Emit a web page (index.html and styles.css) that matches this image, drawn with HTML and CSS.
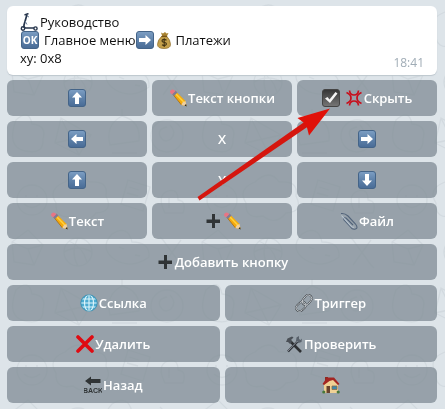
FILE: index.html
```
<!DOCTYPE html>
<html lang="ru">
<head>
    <meta charset="UTF-8">
    <meta name="viewport" content="width=device-width, initial-scale=1.0">
    <title>Руководство</title>
    <link rel="stylesheet" href="styles.css">
</head>
<body>
    <!-- icons used more than once -->
    <svg class="defs" width="0" height="0" aria-hidden="true">
        <defs>
            <linearGradient id="blue" x1="0" y1="0" x2="0" y2="1">
                <stop offset="0" stop-color="#7d9fc4"/>
                <stop offset="0.5" stop-color="#5f82aa"/>
                <stop offset="1" stop-color="#486b96"/>
            </linearGradient>
            <linearGradient id="dark" x1="0" y1="0" x2="0" y2="1">
                <stop offset="0" stop-color="#343434"/>
                <stop offset="1" stop-color="#777"/>
            </linearGradient>
            <pattern id="doodles" width="190" height="170" patternUnits="userSpaceOnUse">
                <g fill="none" stroke="#cbd3d9" stroke-width="1.3">
                    <circle cx="32" cy="30" r="15"/>
                    <path d="M25 26h2M36 26h2M24 34q8 7 16 0"/>
                    <path d="M65 12q15-14 24 0 20-2 17 14 8 16-10 17-10 13-23 3-18 4-17-13-9-14 9-21z"/>
                    <path d="M128 10l22 7-7 24-22-7zM129 17l10 3M127 23l11 3"/>
                    <path d="M165 43q-9-18 3-22 10-3 10 9 9 1 5 13zM169 28v10"/>
                    <path d="M12 72l16-12 15 15-9 20-20-3zM12 72l16 7 15-4M28 79l6 16"/>
                    <circle cx="78" cy="82" r="14"/>
                    <path d="M64 82q14-8 28 0M78 68q-8 14 0 28M69 71q14 6 18 21"/>
                    <path d="M112 64q16-10 20 8 18 0 17 15-18 13-35 2-15-11-2-25zM119 77l5 2M135 85l5 1"/>
                    <path d="M163 70l18 25M181 70l-18 25M160 67l4 4M184 98l-4-4"/>
                    <path d="M16 120q13-12 16 4 15 1 11 15 1 16-18 12-19-4-9-31z"/>
                    <path d="M61 118l30 17-12 20-24-12zM61 118l18 37M91 135l-36 8"/>
                    <path d="M110 145q-5-20 12-29 19 5 17 25zM122 116v-7M112 153h25"/>
                    <circle cx="167" cy="136" r="16"/>
                    <path d="M167 127q-10 2-7 9 4 8 11 3 6-7-1-14"/>
                </g>
            </pattern>
            <symbol id="up" viewBox="0 0 18 18">
                <rect x="0.5" y="0.5" width="17" height="17" rx="2.5" fill="url(#blue)" stroke="#446488"/>
                <path d="M9 3l5 5.500h-3V15H7V8.500H4z" fill="#fff"/>
            </symbol>
            <symbol id="right" viewBox="0 0 18 18">
                <rect x="0.5" y="0.5" width="17" height="17" rx="2.5" fill="url(#blue)" stroke="#446488"/>
                <path d="M15 9l-5.500 5v-3H3V7h6.500V4z" fill="#fff"/>
            </symbol>
            <symbol id="left" viewBox="0 0 18 18">
                <rect x="0.5" y="0.5" width="17" height="17" rx="2.5" fill="url(#blue)" stroke="#446488"/>
                <path d="M3 9l5.500-5v3H15v4H8.500v3z" fill="#fff"/>
            </symbol>
            <symbol id="down" viewBox="0 0 18 18">
                <rect x="0.5" y="0.5" width="17" height="17" rx="2.5" fill="url(#blue)" stroke="#446488"/>
                <path d="M9 15l-5-5.500h3V3h4v6.500h3z" fill="#fff"/>
            </symbol>
            <symbol id="pencil" viewBox="0 0 18 18">
                <path d="M4 5.500l3-3L16.500 12l1 5-5-1z" fill="#f5a90c"/>
                <path d="M5.700 3.800l9.500 9.700" stroke="#ffd13d" stroke-width="1.5"/>
                <path d="M4 5.500l8.500 10.500" stroke="#a56a13" stroke-width="0.8"/>
                <path d="M12.500 16l1-2.500 3-1.500 1 5z" fill="#efd0a0"/>
                <path d="M15.500 16.600l1.600-1.600 0.600 2.400z" fill="#222"/>
                <path d="M3 5l3.500-3.500 2 2-3.500 3.500z" fill="#807b93"/>
                <path d="M1 3.500q0-3 3-3l2.500 1.500L3 5.500z" fill="#e87585"/>
            </symbol>
            <symbol id="plus" viewBox="0 0 18 18">
                <path d="M8 2h3v5.500h5V11h-5v5H8v-5H2.500V7.500H8z" fill="#303436"/>
            </symbol>
        </defs>
    </svg>
    <svg class="wallpaper" aria-hidden="true">
        <rect width="100%" height="100%" fill="url(#doodles)"/>
    </svg>

    <main class="chat">
        <div class="message">
            <p class="line">
                <svg class="icon" viewBox="0 0 18 18">
                    <g fill="none" stroke="#26354c">
                        <path d="M4.500 2L8.500 0.500" stroke-width="1.500"/>
                        <path d="M7 1.500L4 12Q3.500 14.500 5.500 15H14" stroke-width="1.700"/>
                        <path d="M7 3l2 1M5 8l2 3.500" stroke="#6e819a"/>
                        <circle cx="3" cy="15.500" r="1.700" stroke-width="1.400"/>
                        <circle cx="15.500" cy="15.500" r="1.600" stroke-width="1.400"/>
                    </g>
                </svg>
                <span class="word">Руководство</span>
            </p>
            <p class="line">
                <svg class="icon framed" viewBox="0 0 18 18">
                    <rect x="0.500" y="0.500" width="17" height="17" rx="2.500" fill="url(#blue)" stroke="#446488"/>
                    <text class="ok" x="9" y="13" text-anchor="middle">OK</text>
                </svg>
                <span class="word spaced">Главное меню</span>
                <svg class="icon"><use href="#right"/></svg>
                <svg class="icon" viewBox="0 0 18 18">
                    <path d="M6 1.500l2 1 2-1.500 1.500 1.500 2-0.500-2 4h-4z" fill="#a8822f"/>
                    <path d="M7 5h4.500q4 4 4 8.500 0 4-6.500 4t-6.500-4Q2.500 9 7 5z" fill="#c4a04b" stroke="#8d6b28" stroke-width="0.700"/>
                    <path d="M6.500 5.500h5.500" stroke="#765215" stroke-width="1.200"/>
                    <path d="M11.500 9.300Q9 7.500 7.300 9q-1 1.800 1.700 2.300 3 0.600 2.200 2.400-1.500 1.600-4.200 0M9.200 7.300v8.700" fill="none" stroke="#403213" stroke-width="1.100"/>
                </svg>
                <span class="word">Платежи</span>
            </p>
            <p class="line"><span>xy: 0x8</span></p>
            <time class="time">18:41</time>
        </div>

        <div class="row top">
            <button type="button" aria-label="Вверх"><svg class="icon"><use href="#up"/></svg></button>
            <button type="button"><svg class="icon"><use href="#pencil"/></svg>Текст кнопки</button>
            <button type="button">
                <svg class="icon check" viewBox="0 0 18 18">
                    <rect x="0.500" y="0.500" width="17" height="17" rx="2.500" fill="url(#dark)" stroke="#444"/>
                    <path d="M3 9.500l2.500-1.500 2 2.500L13.500 3l2 1.500L8 14z" fill="#f4f4f4"/>
                </svg>
                <svg class="icon" viewBox="0 0 18 18">
                    <g fill="none" stroke="#c80e1b" stroke-width="1.700">
                        <path d="M4.500 1.500q0.500 4.500 4.500 4.500t4.500-4.500"/>
                        <path d="M4.500 16.500q0.500-4.500 4.500-4.500t4.500 4.500"/>
                        <path d="M1.500 3.500Q6 5.500 6 9t-4.500 5.500"/>
                        <path d="M16.500 3.500Q12 5.500 12 9t4.500 5.500"/>
                    </g>
                </svg>Скрыть
            </button>
            <svg class="pointer" viewBox="0 0 140 100" aria-hidden="true">
                <path d="M6.500 91L8.500 94.500 117 20.500l-3-5z" fill="#d5160e"/>
                <path d="M139 2.500L106.500 12l6 4.500 3.500 5 2 8z" fill="#e01109"/>
            </svg>
        </div>
        <div class="row">
            <button type="button" aria-label="Влево"><svg class="icon"><use href="#left"/></svg></button>
            <button type="button">X</button>
            <button type="button" aria-label="Вправо"><svg class="icon"><use href="#right"/></svg></button>
        </div>
        <div class="row">
            <button type="button" aria-label="Вверх"><svg class="icon"><use href="#up"/></svg></button>
            <button type="button">Y</button>
            <button type="button" aria-label="Вниз"><svg class="icon"><use href="#down"/></svg></button>
        </div>
        <div class="row">
            <button type="button"><svg class="icon"><use href="#pencil"/></svg>Текст</button>
            <button type="button" aria-label="Добавить текст"><svg class="icon"><use href="#plus"/></svg><svg class="icon"><use href="#pencil"/></svg></button>
            <button type="button">
                <svg class="icon" viewBox="0 0 18 18">
                    <g fill="none" stroke="#53647b" stroke-width="1.100">
                        <path d="M1 1.500q4-0.500 7 2.500l7.500 8q3 4 0 5t-5-2L4 8q-1-3 2-2l7 7"/>
                        <path d="M1.500 3.500l9 10q2 2.500 3.500 1.500" stroke="#bbc7d3"/>
                    </g>
                </svg>Файл
            </button>
        </div>
        <div class="row">
            <button type="button"><svg class="icon"><use href="#plus"/></svg>Добавить кнопку</button>
        </div>
        <div class="row">
            <button type="button">
                <svg class="icon" viewBox="0 0 18 18">
                    <circle cx="9" cy="9" r="8.300" fill="#4cabd0"/>
                    <g fill="none" stroke="#dff6fb" stroke-width="1.100">
                        <path d="M9 1v16M1 9h16M2.500 5h13M2.500 13h13"/>
                        <ellipse cx="9" cy="9" rx="4.500" ry="8"/>
                    </g>
                    <circle cx="9" cy="9" r="8.200" fill="none" stroke="#388bad" stroke-width="0.800"/>
                </svg>Ссылка
            </button>
            <button type="button">
                <svg class="icon" viewBox="0 0 18 18">
                    <g fill="none">
                        <rect x="6.500" y="2.500" width="11" height="7" rx="3.500" transform="rotate(-50 12 6)" stroke="#3e4349" stroke-width="1.800"/>
                        <rect x="0.500" y="9" width="11" height="7" rx="3.500" transform="rotate(-45 6 12.500)" stroke="#3e4349" stroke-width="1.800"/>
                        <rect x="6.500" y="2.500" width="11" height="7" rx="3.500" transform="rotate(-50 12 6)" stroke="#d7dbdf" stroke-width="0.800"/>
                        <rect x="0.500" y="9" width="11" height="7" rx="3.500" transform="rotate(-45 6 12.500)" stroke="#d7dbdf" stroke-width="0.800"/>
                    </g>
                </svg>Триггер
            </button>
        </div>
        <div class="row">
            <button type="button">
                <svg class="icon" viewBox="0 0 18 18">
                    <path d="M2 2l14 14M16 2L2 16" stroke="#df0b12" stroke-width="3.600" stroke-linecap="round"/>
                </svg>Удалить
            </button>
            <button type="button">
                <svg class="icon" viewBox="0 0 18 18">
                    <path d="M5 6l11 11" stroke="#2e3033" stroke-width="2.600"/>
                    <path d="M1 7l1.500-3.500L7 1.500l1.500 1L6 5l1 2-2 2-2-2z" fill="#4a4f56"/>
                    <path d="M3 16.500L13 6" stroke="#30333a" stroke-width="2.400"/>
                    <path d="M11 6l0.500-3.500L14 1v3l1.500 1L17 3.500 16.500 7 13.500 8z" fill="#59616b"/>
                    <path d="M3 16L12.500 6" stroke="#adb4bd" stroke-width="0.700"/>
                </svg>Проверить
            </button>
        </div>
        <div class="row">
            <button type="button">
                <svg class="icon" viewBox="0 0 18 18">
                    <path d="M1 5l6-4.500v2.500h9.500v4H7v2.500z" fill="#303436"/>
                    <text class="back" x="9" y="17" text-anchor="middle">BACK</text>
                </svg>Назад
            </button>
            <button type="button" aria-label="Домой">
                <svg class="icon" viewBox="0 0 18 18">
                    <path d="M3 1h3v6H3z" fill="#8c2920"/>
                    <path d="M2 9l4-6h6l4 6v8H2z" fill="#efd195"/>
                    <path d="M0.500 8L5 1.500h7L17.500 8l-1.500 1-5-5-3.500 1L2 9z" fill="#a32522"/>
                    <path d="M4.500 10h3.500v7H4.500z" fill="#69432e"/>
                    <path d="M10 10h5v3.500h-5z" fill="#3b88ad" stroke="#8b6c46" stroke-width="0.800"/>
                    <circle cx="1.800" cy="16" r="1.600" fill="#48783b"/>
                    <circle cx="16.200" cy="16" r="1.600" fill="#48783b"/>
                </svg>
            </button>
        </div>
    </main>
</body>
</html>
```
FILE: styles.css
```
* {
    box-sizing: border-box;
}

body {
    margin: 0;
    background-color: #dde4e9;
    font-family: 'Open Sans', 'Noto Sans', sans-serif;
    font-size: 13px;
    line-height: 18px;
    color: #111;
}

.defs {
    position: absolute;
}

.wallpaper {
    position: fixed;
    top: 0;
    left: 0;
    width: 100%;
    height: 100%;
    opacity: 0.6;
}

.chat {
    position: relative;
    display: flex;
    flex-direction: column;
    gap: 5px;
    padding: 6px 8px 6px 7px;
}

.message {
    position: relative;
    padding: 7px 13px;
    background-color: #fff;
    border-radius: 6px;
    box-shadow: 0 1px 1px #bdc7ce;
    min-height: 69px;
}

.line {
    display: flex;
    align-items: center;
    gap: 1px;
    height: 18px;
    margin: 0;
}

.word {
    margin: 0 1px;
}

.framed {
    margin-left: 1px;
}

.spaced {
    margin: 0 0 0 4px;
}

.time {
    position: absolute;
    right: 13px;
    bottom: 3px;
    font-size: 12px;
    color: #a0acb6;
}

.icon {
    flex: none;
    width: 18px;
    height: 18px;
}

.ok {
    font-size: 10px;
    font-weight: 700;
    fill: #fff;
}

.back {
    font-family: 'Liberation Sans', sans-serif;
    font-size: 7px;
    font-weight: 700;
    fill: #303436;
}

.row {
    display: flex;
    gap: 5px;
}

.top {
    position: relative;
}

button {
    flex: 1 1 0;
    display: flex;
    align-items: center;
    justify-content: center;
    gap: 1px;
    min-width: 0;
    height: 36px;
    padding: 0;
    border: none;
    border-radius: 6px;
    background-color: rgba(127, 139, 148, 0.75);
    color: #fff;
    font-family: inherit;
    font-size: 13px;
    font-weight: 600;
    line-height: 18px;
    cursor: pointer;
}

button:hover {
    background-color: rgba(112, 125, 135, 0.75);
}

.check {
    margin-right: 4px;
}

.pointer {
    position: absolute;
    z-index: 1;
    right: 106px;
    top: 26px;
    width: 140px;
    height: 100px;
    pointer-events: none;
}
```
